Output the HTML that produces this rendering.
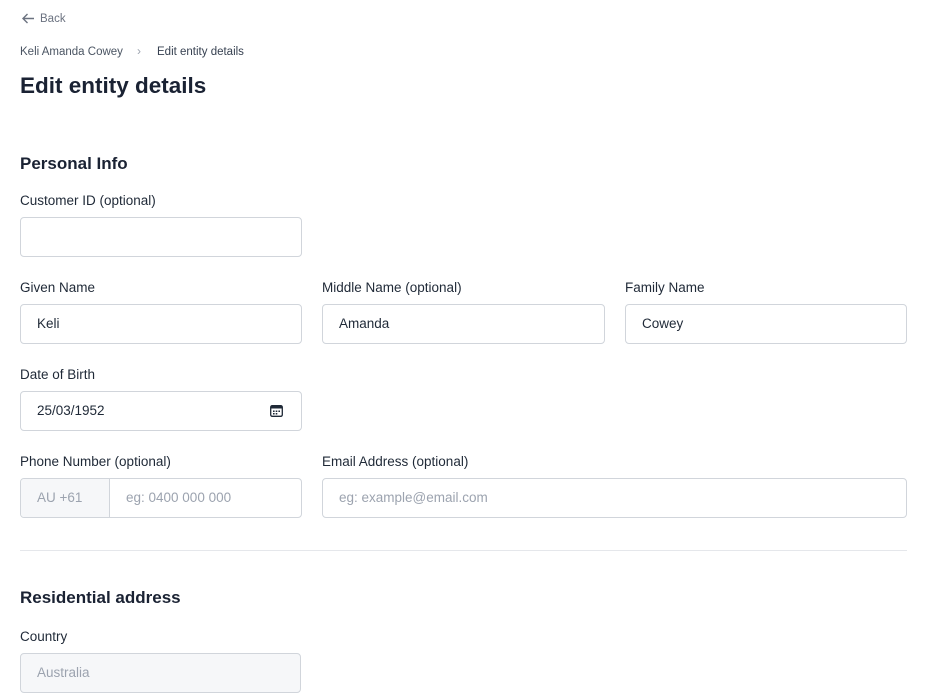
<!DOCTYPE html>
<html><head><style>
body{margin:0;width:939px;height:700px;overflow:hidden;background:#fff;font-family:"Liberation Sans",sans-serif;color:#1a2233;position:relative}
.a{position:absolute;white-space:nowrap}
.lbl{font-size:13.5px;color:#1f2937}
.in{position:absolute;box-sizing:border-box;height:40px;border:1px solid #d1d5db;border-radius:4px;background:#fff;font-size:13.5px;padding-left:16px;line-height:38px;color:#1f2937}
.ph{color:#9ca3af}
</style></head><body>
<svg class="a" style="left:21px;top:12px" width="14" height="13" viewBox="0 0 14 13"><path d="M13 6.5H2M6.5 2L2 6.5L6.5 11" stroke="#6b7280" stroke-width="1.4" fill="none"/></svg>
<div class="a" style="left:40px;top:13px;font-size:11.5px;color:#6b7280">Back</div>
<div class="a" style="left:20px;top:46px;font-size:11.5px;color:#4b5563">Keli Amanda Cowey</div>
<div class="a" style="left:137px;top:44px;font-size:12px;color:#9ca3af">›</div>
<div class="a" style="left:157px;top:46px;font-size:11.5px;color:#374151">Edit entity details</div>
<div class="a" style="left:20px;top:73px;font-size:22.5px;font-weight:bold;color:#1a2233">Edit entity details</div>
<div class="a" style="left:20px;top:154px;font-size:17px;font-weight:bold">Personal Info</div>
<div class="a lbl" style="left:20px;top:193px">Customer ID (optional)</div>
<div class="in" style="left:20px;top:217px;width:282px"></div>
<div class="a lbl" style="left:20px;top:280px">Given Name</div>
<div class="a lbl" style="left:322px;top:280px">Middle Name (optional)</div>
<div class="a lbl" style="left:625px;top:280px">Family Name</div>
<div class="in" style="left:20px;top:304px;width:282px">Keli</div>
<div class="in" style="left:322px;top:304px;width:283px">Amanda</div>
<div class="in" style="left:625px;top:304px;width:282px">Cowey</div>
<div class="a lbl" style="left:20px;top:367px">Date of Birth</div>
<div class="in" style="left:20px;top:391px;width:282px">25/03/1952
<svg style="position:absolute;left:249px;top:13px" width="13" height="12" viewBox="0 0 13 12"><rect x="0.7" y="0.7" width="11.6" height="10.6" rx="1.5" fill="none" stroke="#1f2937" stroke-width="1.3"/><rect x="1" y="1" width="11" height="2.5" fill="#1f2937"/><rect x="3" y="5.5" width="1.6" height="1.5" fill="#1f2937"/><rect x="5.7" y="5.5" width="1.6" height="1.5" fill="#1f2937"/><rect x="8.4" y="5.5" width="1.6" height="1.5" fill="#1f2937"/><rect x="3" y="8" width="1.6" height="1.5" fill="#1f2937"/><rect x="5.7" y="8" width="1.6" height="1.5" fill="#1f2937"/></svg></div>
<div class="a lbl" style="left:20px;top:454px">Phone Number (optional)</div>
<div class="a lbl" style="left:322px;top:454px">Email Address (optional)</div>
<div class="in" style="left:20px;top:478px;width:282px;padding:0;overflow:hidden">
<div style="position:absolute;left:0;top:0;width:89px;height:38px;background:#f6f7f9;border-right:1px solid #d1d5db;padding-left:16px;box-sizing:border-box" class="ph">AU +61</div>
<div style="position:absolute;left:90px;top:0;padding-left:0" class="ph">&nbsp;&nbsp;&nbsp;&nbsp;eg: 0400 000 000</div></div>
<div class="in ph" style="left:322px;top:478px;width:585px">eg: example@email.com</div>
<div class="a" style="left:20px;top:550px;width:887px;height:1px;background:#e5e7eb"></div>
<div class="a" style="left:20px;top:588px;font-size:17px;font-weight:bold">Residential address</div>
<div class="a lbl" style="left:20px;top:629px">Country</div>
<div class="in ph" style="left:20px;top:653px;width:281px;background:#f6f7f9">Australia</div>
</body></html>
